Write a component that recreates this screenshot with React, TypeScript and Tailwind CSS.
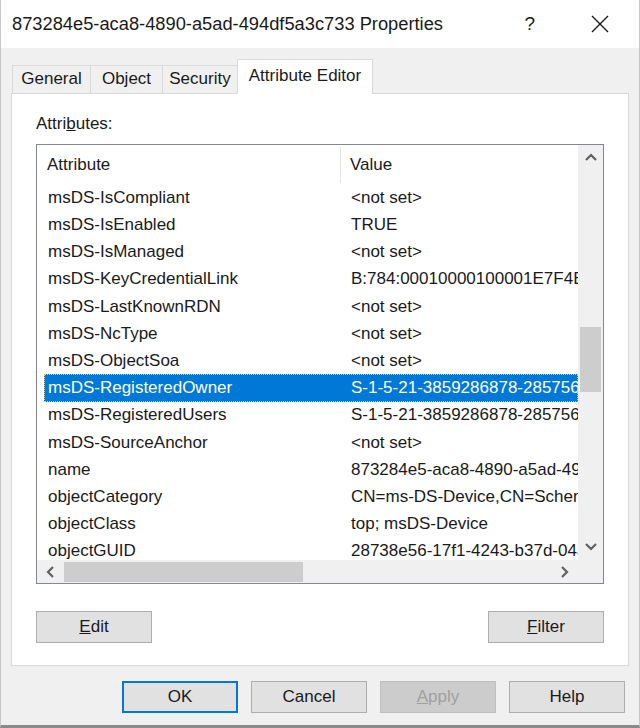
import type { ReactNode } from 'react';

type Row = { attr: string; value: string; selected?: boolean };

const ROWS: Row[] = [
  { attr: 'msDS-IsCompliant', value: '<not set>' },
  { attr: 'msDS-IsEnabled', value: 'TRUE' },
  { attr: 'msDS-IsManaged', value: '<not set>' },
  { attr: 'msDS-KeyCredentialLink', value: 'B:784:00010000100001E7F4B2C0A1' },
  { attr: 'msDS-LastKnownRDN', value: '<not set>' },
  { attr: 'msDS-NcType', value: '<not set>' },
  { attr: 'msDS-ObjectSoa', value: '<not set>' },
  { attr: 'msDS-RegisteredOwner', value: 'S-1-5-21-3859286878-2857561234', selected: true },
  { attr: 'msDS-RegisteredUsers', value: 'S-1-5-21-3859286878-2857561234' },
  { attr: 'msDS-SourceAnchor', value: '<not set>' },
  { attr: 'name', value: '873284e5-aca8-4890-a5ad-494df5a3c733' },
  { attr: 'objectCategory', value: 'CN=ms-DS-Device,CN=Schema,CN=Configuration' },
  { attr: 'objectClass', value: 'top; msDS-Device' },
  { attr: 'objectGUID', value: '28738e56-17f1-4243-b37d-04a1c2' },
];

const FONT = "font-['Segoe_UI','Liberation_Sans',Arial,sans-serif]";

function Chevron({ dir }: { dir: 'up' | 'down' | 'left' | 'right' }) {
  const pts = {
    up: '1,8 6,3 11,8',
    down: '1,3 6,8 11,3',
    left: '8,1 3,6 8,11',
    right: '3,1 8,6 3,11',
  }[dir];
  return (
    <svg width="12" height="12" viewBox="0 0 12 12">
      <polyline points={pts} fill="none" stroke="#606060" strokeWidth="2.2" />
    </svg>
  );
}

function Button({
  children,
  variant = 'normal',
}: {
  children: ReactNode;
  variant?: 'normal' | 'default' | 'disabled';
}) {
  const cls =
    variant === 'default'
      ? 'border-2 border-[#0078d7] bg-[#e1e1e1] text-[#1a1a1a]'
      : variant === 'disabled'
        ? 'border border-[#bfbfbf] bg-[#cccccc] text-[#a0a0a0]'
        : 'border border-[#adadad] bg-[#e1e1e1] text-[#1a1a1a]';
  return (
    <div className={`w-[116px] h-[32px] flex items-center justify-center text-[17px] ${cls}`}>
      {children}
    </div>
  );
}

export default function App() {
  return (
    <div
      className={`w-[640px] h-[728px] bg-[#f0f0f0] border-l border-r border-b-[3px] border-[#8a8a8a] border-l-[#c8c8c8] border-r-[#c8c8c8] flex flex-col overflow-hidden ${FONT}`}
    >
      {/* title bar */}
      <div className="h-[48px] shrink-0 bg-white flex items-center pl-[11px] pr-[30px]">
        <span className="text-[18.3px] text-[#1a1a1a]">
          873284e5-aca8-4890-a5ad-494df5a3c733 Properties
        </span>
        <span className="ml-auto text-[19px] text-[#1a1a1a] mr-[56px]">?</span>
        <svg width="18" height="18" viewBox="0 0 18 18">
          <path d="M1 1 L17 17 M17 1 L1 17" stroke="#1a1a1a" strokeWidth="1.4" />
        </svg>
      </div>

      {/* tabs */}
      <div className="mt-[12px] pl-[11px] flex items-end h-[33px] text-[17px] text-[#1a1a1a]">
        <div className="w-[78px] h-[28px] text-center leading-[26px] bg-[#f0f0f0] border border-b-0 border-r-0 border-[#d9d9d9]">
          General
        </div>
        <div className="w-[72px] h-[28px] text-center leading-[26px] bg-[#f0f0f0] border border-b-0 border-r-0 border-[#d9d9d9]">
          Object
        </div>
        <div className="w-[76px] h-[28px] text-center leading-[26px] bg-[#f0f0f0] border border-b-0 border-[#d9d9d9]">
          Security
        </div>
        <div className="relative z-10 -mb-px -ml-[1px] w-[136px] h-[35px] pt-[3px] text-center bg-white border border-b-0 border-[#d9d9d9]">
          Attribute Editor
        </div>
      </div>

      {/* tab panel */}
      <div className="mx-[10px] h-[573px] bg-white border border-[#d9d9d9] flex flex-col pl-[24px] pr-[24px]">
        <div className="mt-[19px] text-[17px] text-[#1a1a1a] leading-[22px]">
          Attri<span className="underline">b</span>utes:
        </div>

        {/* list view */}
        <div className="mt-[9px] w-[568px] h-[440px] border border-[#828790] flex flex-col">
          <div className="flex h-[415px]">
            <div className="w-[541px] overflow-hidden flex flex-col">
              <div className="h-[39px] shrink-0 flex items-center text-[17px] text-[#1a1a1a]">
                <div className="w-[304px] pl-[10px] h-[36px] flex items-center border-r border-[#e5e5e5]">
                  Attribute
                </div>
                <div className="pl-[9px]">Value</div>
              </div>
              <div className="flex flex-col pl-[7px]">
                {ROWS.map((r) => (
                  <div
                    key={r.attr}
                    className={`h-[27.2px] shrink-0 flex items-center text-[17px] whitespace-nowrap ${
                      r.selected
                        ? 'bg-[#0078d7] text-white outline-1 outline-dotted outline-[#e8c880] -outline-offset-1'
                        : 'text-[#1a1a1a]'
                    }`}
                  >
                    <div className="w-[303px] pl-[4px] overflow-hidden">{r.attr}</div>
                    <div className="pl-[4px] overflow-hidden flex-1">{r.value}</div>
                  </div>
                ))}
              </div>
            </div>
            {/* vertical scrollbar */}
            <div className="w-[25px] bg-[#f0f0f0] flex flex-col items-center">
              <div className="h-[26px] flex items-center justify-center">
                <Chevron dir="up" />
              </div>
              <div className="flex-1 w-full flex flex-col px-[2px]">
                <div className="h-[156px]" />
                <div className="h-[65px] bg-[#cdcdcd]" />
              </div>
              <div className="h-[26px] flex items-center justify-center">
                <Chevron dir="down" />
              </div>
            </div>
          </div>
          {/* horizontal scrollbar */}
          <div className="h-[23px] flex">
            <div className="w-[541px] bg-[#f0f0f0] flex items-center">
              <div className="w-[27px] flex justify-center">
                <Chevron dir="left" />
              </div>
              <div className="w-[239px] h-[20px] bg-[#cdcdcd]" />
              <div className="ml-auto w-[27px] flex justify-center">
                <Chevron dir="right" />
              </div>
            </div>
            <div className="w-[25px] bg-[#f0f0f0]" />
          </div>
        </div>

        <div className="mt-[27px] flex justify-between">
          <Button>
            <span className="underline">E</span>dit
          </Button>
          <Button>
            <span className="underline">F</span>ilter
          </Button>
        </div>
      </div>

      {/* dialog buttons */}
      <div className="mt-[15px] flex justify-end gap-[13px] pr-[14px]">
        <Button variant="default">OK</Button>
        <Button>Cancel</Button>
        <Button variant="disabled">
          <span className="underline">A</span>pply
        </Button>
        <Button>Help</Button>
      </div>
    </div>
  );
}
